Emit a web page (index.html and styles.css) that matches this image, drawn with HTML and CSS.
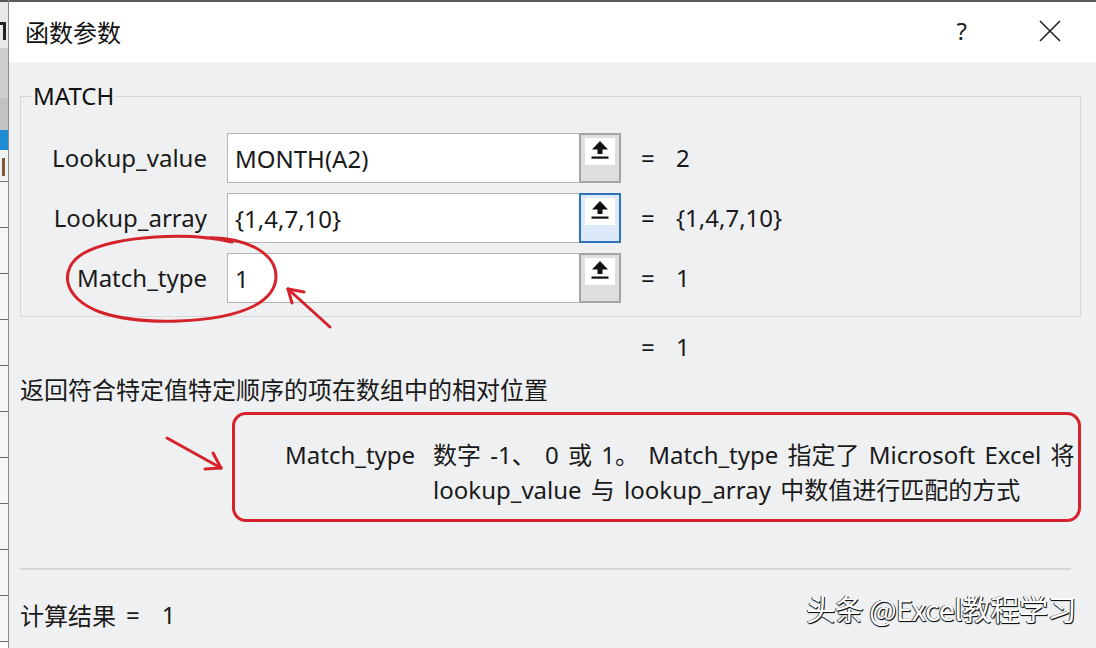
FILE: index.html
```html
<!DOCTYPE html>
<html lang="zh-CN">
<head>
<meta charset="utf-8">
<title>函数参数</title>
<link rel="stylesheet" href="styles.css">
</head>
<body>
<div class="page">
  <div class="strip">
    <div class="s s1"><span class="mark-t"></span></div>
    <div class="s s2"></div>
    <div class="s s3"></div>
    <div class="s s4"></div>
    <div class="s s5"><span class="mark-i"></span></div>
    <div class="s cell"></div>
    <div class="s cell"></div>
    <div class="s cell"></div>
    <div class="s cell"></div>
    <div class="s cell"></div>
    <div class="s cell"></div>
    <div class="s cell"></div>
    <div class="s cell"></div>
    <div class="s cell"></div>
    <div class="s cell"></div>
  </div>
  <div class="dialog">
    <div class="titlebar">
      <div class="title">函数参数</div>
      <div class="tb-btns">
        <span class="help">?</span>
        <svg class="close" width="22" height="22" viewBox="0 0 22 22"><path d="M1 1 L21 21 M21 1 L1 21" stroke="#222" stroke-width="1.6" fill="none"/></svg>
      </div>
    </div>
    <div class="body">
      <fieldset class="group">
        <legend>MATCH</legend>
        <div class="rows">
          <div class="lbl">Lookup_value</div>
          <div class="inp">MONTH(A2)</div>
          <div class="btn"><div class="btn-face"><svg width="20" height="20" viewBox="0 0 20 20"><polygon points="10,1 2,9.5 7.5,9.5 7.5,14 12.5,14 12.5,9.5 18,9.5" fill="#111"/><rect x="1.5" y="16.5" width="17" height="2.2" fill="#111"/></svg></div></div>
          <div class="eq">=</div>
          <div class="val">2</div>

          <div class="lbl">Lookup_array</div>
          <div class="inp">{1,4,7,10}</div>
          <div class="btn focus"><div class="btn-face"><svg width="20" height="20" viewBox="0 0 20 20"><polygon points="10,1 2,9.5 7.5,9.5 7.5,14 12.5,14 12.5,9.5 18,9.5" fill="#111"/><rect x="1.5" y="16.5" width="17" height="2.2" fill="#111"/></svg></div></div>
          <div class="eq">=</div>
          <div class="val">{1,4,7,10}</div>

          <div class="lbl">Match_type</div>
          <div class="inp">1</div>
          <div class="btn"><div class="btn-face"><svg width="20" height="20" viewBox="0 0 20 20"><polygon points="10,1 2,9.5 7.5,9.5 7.5,14 12.5,14 12.5,9.5 18,9.5" fill="#111"/><rect x="1.5" y="16.5" width="17" height="2.2" fill="#111"/></svg></div></div>
          <div class="eq">=</div>
          <div class="val">1</div>
        </div>
      </fieldset>
      <div class="total"><span class="eq">=</span><span class="val">1</span></div>
      <div class="desc">返回符合特定值特定顺序的项在数组中的相对位置</div>
      <div class="argbox">
        <div class="arg-name">Match_type</div>
        <div class="arg-text">数字 -1、 0 或 1。 Match_type 指定了 Microsoft Excel 将<br>lookup_value 与 lookup_array 中数值进行匹配的方式</div>
      </div>
      <div class="sep"></div>
      <div class="footer">
        <div class="result">计算结果<span class="r-eq">=</span><span class="r-val">1</span></div>
        <div class="watermark">头条 @Excel教程学习</div>
      </div>
    </div>
  </div>
  <svg class="marks" width="1096" height="648" viewBox="0 0 1096 648">
    <g fill="none" stroke="#d6222a" stroke-width="3" stroke-linecap="round" stroke-linejoin="round">
      <path d="M232 242 C 190 232, 118 235, 84 253 C 58 268, 62 298, 100 312 C 140 326, 218 324, 254 306 C 284 290, 282 262, 256 248 C 240 240, 222 237, 205 238"/>
      <path d="M330 327 L288 289"/>
      <path d="M288 289 L304 292"/>
      <path d="M288 289 L292 303"/>
      <path d="M167 438 L221 468"/>
      <path d="M221 468 L205 469"/>
      <path d="M221 468 L213 453"/>
    </g>
  </svg>
</div>
</body>
</html>
```

FILE: styles.css
```css
* { box-sizing: border-box; }
html, body { margin: 0; padding: 0; }
body {
  width: 1096px;
  height: 648px;
  overflow: hidden;
  font-family: "Noto Sans", "Noto Sans CJK SC", sans-serif;
  color: #1c1c1c;
  background: #eff0f1;
}
.page {
  position: relative;
  display: flex;
  width: 1096px;
  height: 648px;
}
.strip {
  width: 8px;
  flex: none;
  display: flex;
  flex-direction: column;
  background: #fff;
  overflow: hidden;
}
.s { flex: none; position: relative; overflow: hidden; }
.s1 { height: 48px; background: #e9e9e9; border-top: 2px solid #555; }
.s2 { height: 50px; background: #cfcfcf; }
.s3 { height: 32px; background: #c2c2c2; }
.s4 { height: 20px; background: #1b8dd3; }
.s5 { height: 32px; background: #f2f2f2; border-bottom: 1px solid #777; }
.cell { height: 46px; background: #f6f6f6; border-bottom: 1px solid #6a6a6a; }
.mark-t {
  position: absolute; left: 0; top: 20px;
  width: 6px; height: 18px;
  border-top: 3px solid #222;
  border-right: 3px solid #222;
}
.mark-i {
  position: absolute; left: 2px; top: 8px;
  width: 3px; height: 18px;
  background: #7a5a3a;
}

.dialog {
  flex: 1;
  display: flex;
  flex-direction: column;
  border-left: 1px solid #8a8a8a;
  min-width: 0;
}
.titlebar {
  height: 62px;
  flex: none;
  background: #fff;
  border-top: 2px solid #5b5b5b;
  display: flex;
  align-items: center;
  justify-content: space-between;
  padding: 0 35px 0 16px;
}
.title {
  font-family: "Noto Sans CJK SC", sans-serif;
  font-size: 24px;
  color: #111;
  margin-top: -2px;
}
.tb-btns { display: flex; align-items: center; gap: 72px; }
.help { font-size: 24px; color: #222; margin-top: -4px; }
.close { margin-top: -2px; }

.body {
  flex: 1;
  display: flex;
  flex-direction: column;
  padding: 0 15px 0 11px;
}
.group {
  margin: 19px 0 0 0;
  padding: 22px 0 13px 0;
  border: 1px solid #d6d7d9;
  min-width: 0;
}
.group legend {
  margin-left: 11px;
  padding: 0 1px;
  font-size: 24px;
  line-height: 30px;
  color: #111;
}
.rows {
  display: grid;
  grid-template-columns: 186px 20px 352px 42px 20px 35px auto;
  grid-auto-rows: 50px;
  row-gap: 10px;
  align-items: center;
}
.rows .lbl { grid-column: 1; }
.rows .inp { grid-column: 3; }
.rows .btn { grid-column: 4; }
.rows .eq { grid-column: 6; }
.rows .val { grid-column: 7; }
.lbl {
  font-size: 24px;
  text-align: right;
  color: #1a1a1a;
  margin-top: -2px;
  white-space: nowrap;
}
.inp {
  height: 50px;
  background: #fff;
  border: 1px solid #b4b4b4;
  border-right: none;
  font-size: 24px;
  padding-left: 7px;
  display: flex;
  align-items: center;
  color: #1a1a1a;
}
.btn {
  height: 50px;
  border: 2px solid #a4a4a4;
  background: #dfdfdf;
  padding: 3px 4px 0 4px;
}
.btn-face {
  height: 27px;
  background: #fff;
  display: flex;
  align-items: flex-start;
  justify-content: center;
  padding-top: 2px;
}
.btn.focus { border-color: #2f73bd; background: #dbe9f8; }
.eq, .val { font-size: 24px; color: #1a1a1a; margin-top: -2px; }

.total {
  margin-top: 15px;
  height: 30px;
  padding-left: 621px;
  display: flex;
  align-items: center;
}
.total .eq { width: 35px; }
.desc {
  margin-top: 12px;
  font-family: "Noto Sans CJK SC", sans-serif;
  font-size: 24px;
  line-height: 30px;
  color: #1a1a1a;
}
.argbox {
  margin: 8px 0 0 212px;
  height: 110px;
  border: 3px solid #d6222a;
  border-radius: 14px;
  display: flex;
  gap: 18px;
  padding: 22px 0 0 50px;
}
.arg-name, .arg-text {
  font-size: 24px;
  line-height: 35px;
  color: #1a1a1a;
  white-space: nowrap;
}
.arg-text { word-spacing: 3px; }
.sep {
  margin-top: 46px;
  height: 2px;
  background: #d6d7d9;
  margin-right: 10px;
}
.footer {
  margin-top: 30px;
  display: flex;
  align-items: center;
  justify-content: space-between;
  padding-right: 5px;
}
.result {
  font-family: "Noto Sans CJK SC", sans-serif;
  font-size: 24px;
  line-height: 30px;
  color: #1a1a1a;
  display: flex;
  align-items: center;
}
.r-eq { margin-left: 10px; font-family: "Noto Sans", sans-serif; }
.r-val { margin-left: 22px; font-family: "Noto Sans", sans-serif; }
.watermark {
  font-family: "Noto Sans CJK SC", sans-serif;
  font-size: 29px;
  color: #fff;
  margin-top: -14px;
  text-shadow: 1px 1px 0 #111, -1px 0 0 #444, 0 1px 1px #000;
  letter-spacing: -0.5px;
}
.marks {
  position: absolute;
  left: 0;
  top: 0;
  pointer-events: none;
}
```
